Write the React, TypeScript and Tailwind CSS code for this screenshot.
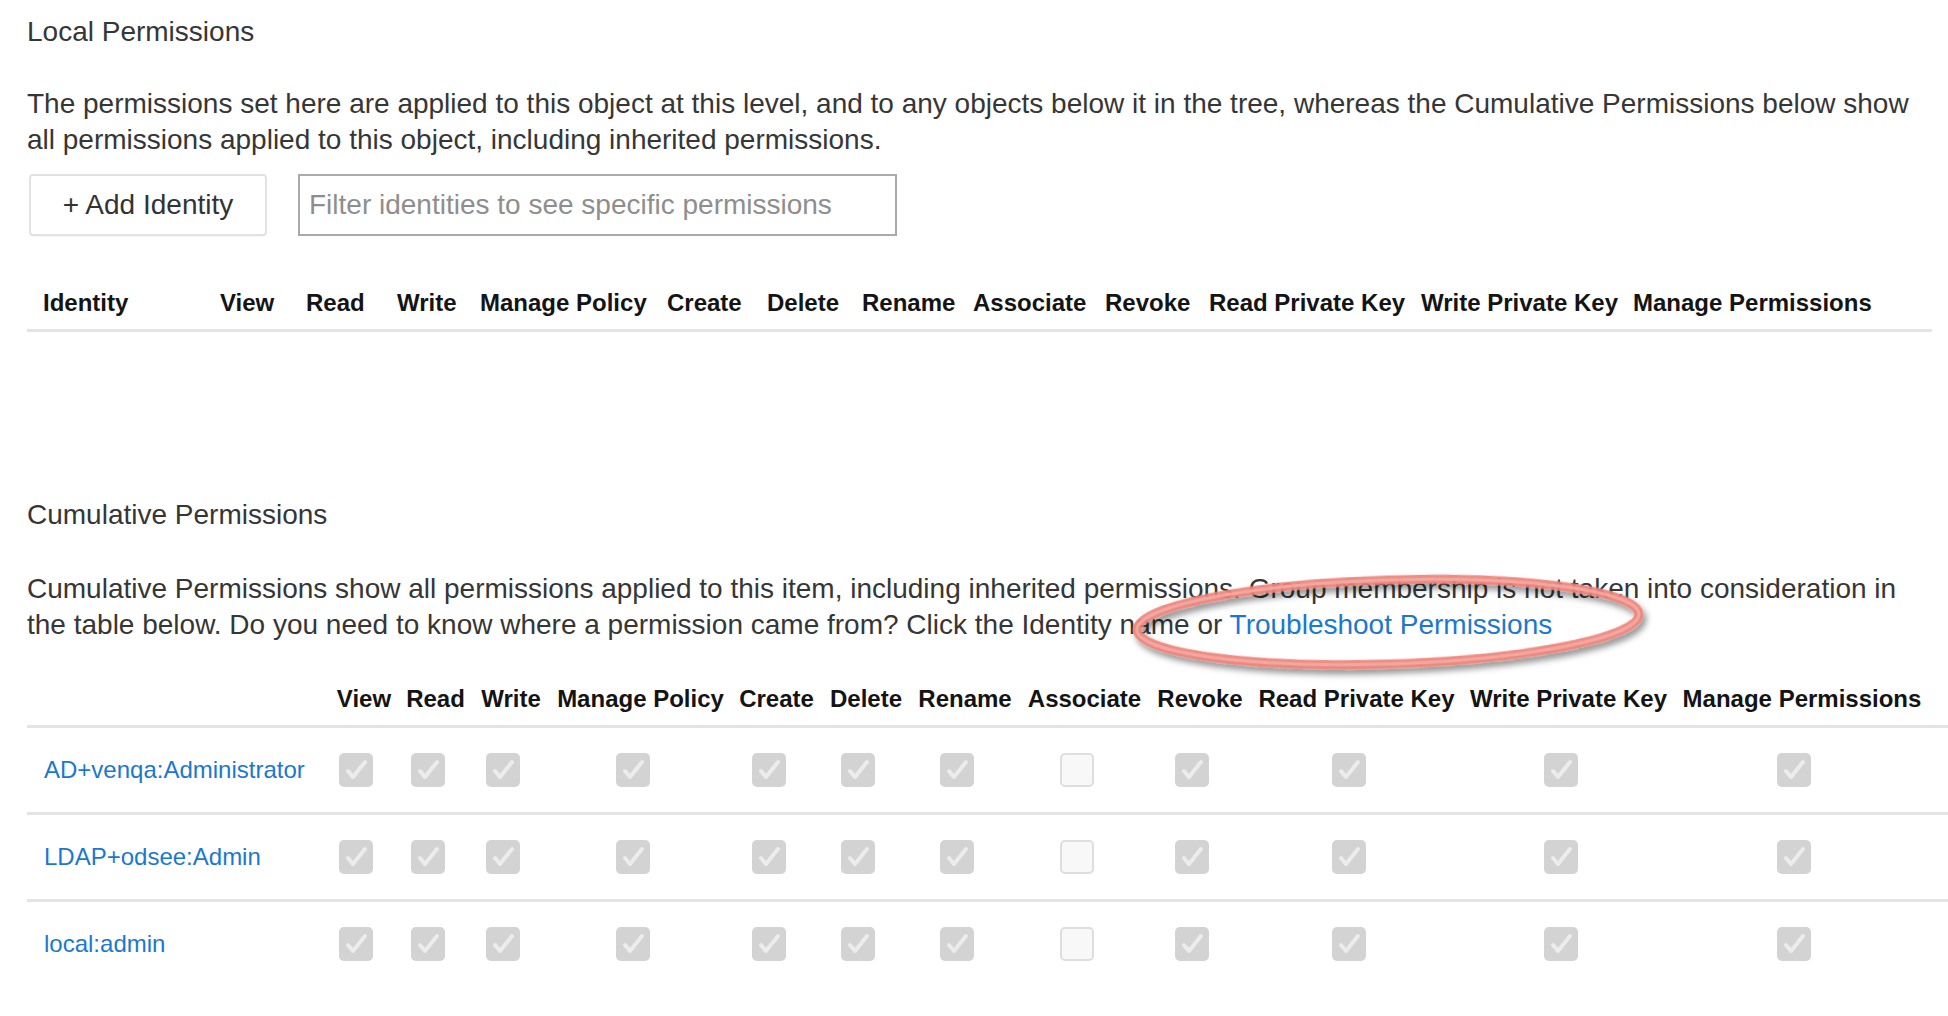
import React from "react";

const topCols =
  "grid grid-cols-[193px_86px_91px_83px_187px_100px_95px_111px_132px_104px_212px_212px_1fr]";
const botCols =
  "grid grid-cols-[302px_70px_73px_78px_181px_91px_88px_110px_129px_102px_211px_213px_254px]";

const perms = [
  "View",
  "Read",
  "Write",
  "Manage Policy",
  "Create",
  "Delete",
  "Rename",
  "Associate",
  "Revoke",
  "Read Private Key",
  "Write Private Key",
  "Manage Permissions",
];

const rows = ["AD+venqa:Administrator", "LDAP+odsee:Admin", "local:admin"];

function Box({ checked }: { checked: boolean }) {
  if (!checked) {
    return (
      <div className="w-[34px] h-[34px] rounded-[5px] bg-[#f8f8f8] border-2 border-[#dedede]" />
    );
  }
  return (
    <div className="w-[34px] h-[34px] rounded-[5px] bg-[#d3d3d3] flex items-center justify-center">
      <svg width="34" height="34" viewBox="0 0 34 34">
        <polyline
          points="9,18 14,24 26,9"
          fill="none"
          stroke="#ececec"
          strokeWidth="4"
          strokeLinecap="round"
          strokeLinejoin="round"
        />
      </svg>
    </div>
  );
}

export default function App() {
  return (
    <div className="relative w-[1948px] min-h-[1016px] bg-white pl-[27px] pr-[16px] pt-[14px] font-['Liberation_Sans',Arial,sans-serif] text-[#363636] overflow-hidden">
      <div className="text-[28px] leading-[36px]">Local Permissions</div>
      <p className="mt-[36px] text-[28px] leading-[36px]">
        The permissions set here are applied to this object at this level, and to any objects
        below it in the tree, whereas the Cumulative Permissions below show all permissions
        applied to this object, including inherited permissions.
      </p>
      <div className="mt-[16px] flex items-center">
        <button className="ml-[2px] h-[62px] w-[238px] rounded-[4px] border-2 border-[#e2e2e2] bg-white text-[28px] text-[#333] shadow-[0_1px_1px_rgba(0,0,0,0.04)]">
          + Add Identity
        </button>
        <div className="ml-[31px] h-[62px] w-[599px] border-2 border-[#aaaaaa] bg-white flex items-center pl-[9px]">
          <span className="text-[28px] text-[#8e8e8e]">
            Filter identities to see specific permissions
          </span>
        </div>
      </div>

      <div
        className={`${topCols} mt-[50px] pb-[9px] border-b-[3px] border-[#e4e4e4] text-[24px] leading-[34px] font-bold text-[#141414]`}
      >
        <div className="pl-[16px]">Identity</div>
        {perms.map((p) => (
          <div key={p} className="whitespace-nowrap">
            {p}
          </div>
        ))}
      </div>

      <div className="mt-[165px] text-[28px] leading-[36px]">Cumulative Permissions</div>
      <p className="mt-[38px] text-[28px] leading-[36px]">
        Cumulative Permissions show all permissions applied to this item, including inherited
        permissions. Group membership is not taken into consideration in the table below. Do you
        need to know where a permission came from? Click the Identity name or{" "}
        <a className="text-[#1b78d0] cursor-pointer">Troubleshoot Permissions</a>
      </p>

      <div className="mt-[39px] -mr-[16px]">
        <div
          className={`${botCols} pb-[9px] border-b-[3px] border-[#e4e4e4] text-[24px] leading-[34px] font-bold text-[#141414]`}
        >
          <div />
          {perms.map((p) => (
            <div key={p} className="text-center whitespace-nowrap">
              {p}
            </div>
          ))}
        </div>
        {rows.map((r, i) => (
          <div
            key={r}
            className={`${botCols} h-[84px] items-center ${
              i < rows.length - 1 ? "border-b-[3px] border-[#e4e4e4]" : ""
            } box-content`}
          >
            <a className="pl-[17px] text-[24px] text-[#1b78d0] cursor-pointer whitespace-nowrap">
              {r}
            </a>
            {perms.map((p) => (
              <div key={p} className="flex justify-center pr-[16px]">
                <Box checked={p !== "Associate"} />
              </div>
            ))}
          </div>
        ))}
      </div>

      <svg
        className="absolute left-[1110px] top-[555px] pointer-events-none"
        width="560"
        height="135"
        viewBox="0 0 560 135"
      >
        <defs>
          <filter id="sh" x="-10%" y="-30%" width="120%" height="170%">
            <feDropShadow dx="3" dy="5" stdDeviation="3" floodColor="#000" floodOpacity="0.45" />
          </filter>
        </defs>
        <g transform="rotate(-1.8 278 67)" filter="url(#sh)">
          <ellipse cx="278" cy="67" rx="251" ry="42" fill="none" stroke="#ec8379" strokeWidth="9" opacity="0.9" />
          <ellipse cx="278" cy="67" rx="251" ry="42" fill="none" stroke="#f6aaa3" strokeWidth="3" opacity="0.9" />
        </g>
      </svg>
    </div>
  );
}
